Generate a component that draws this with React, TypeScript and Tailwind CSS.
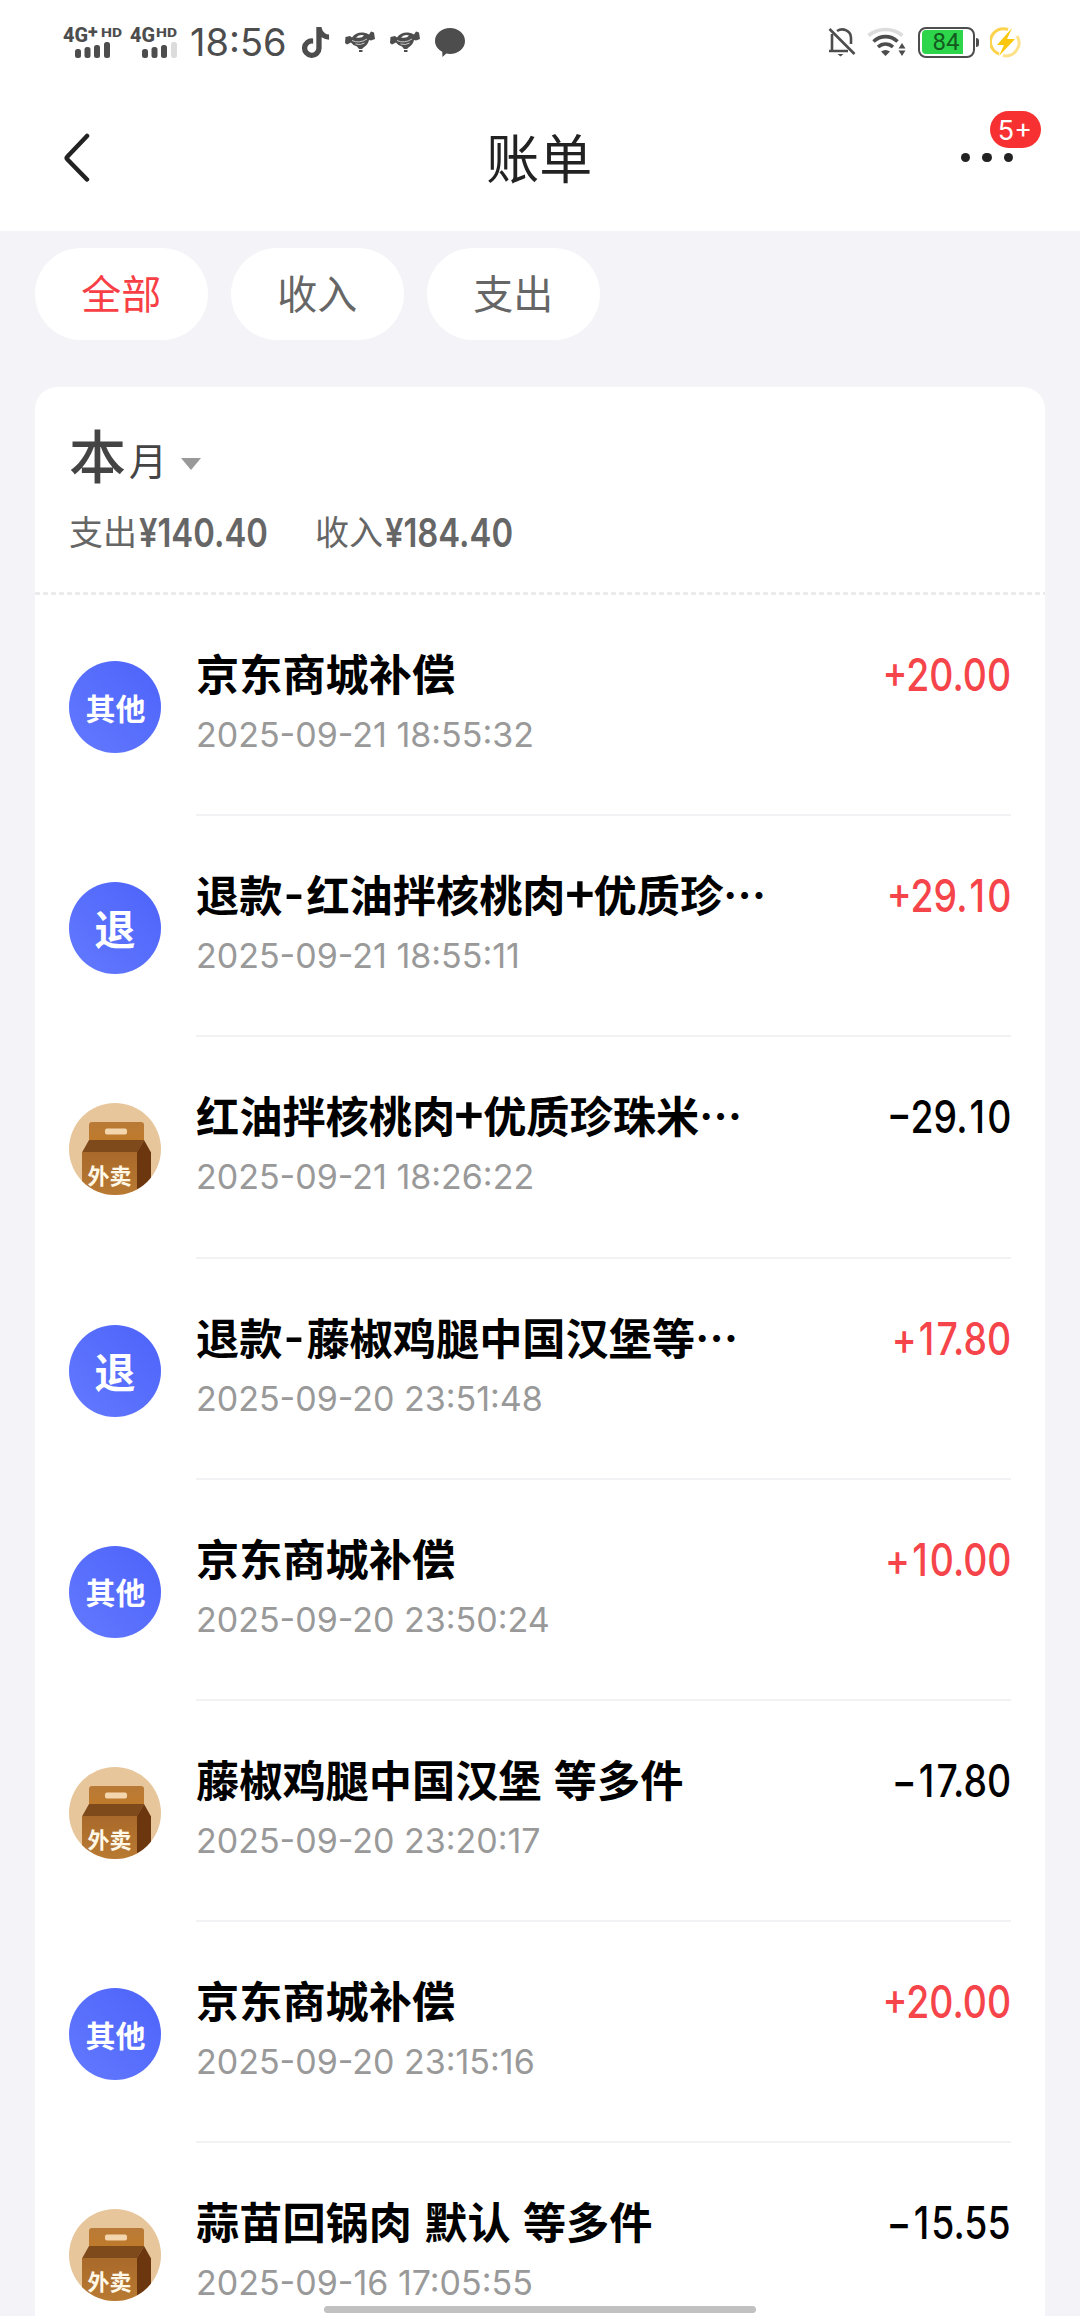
import { Fragment } from "react";
import { FaTiktok } from "react-icons/fa6";

type Kind = "other" | "refund" | "takeout";

interface Bill {
  id: number;
  kind: Kind;
  title: string;
  time: string;
  amount: string;
}

const filters = ["全部", "收入", "支出"];

const bills: Bill[] = [
  { id: 1, kind: "other", title: "京东商城补偿", time: "2025-09-21 18:55:32", amount: "+20.00" },
  { id: 2, kind: "refund", title: "退款-红油拌核桃肉+优质珍…", time: "2025-09-21 18:55:11", amount: "+29.10" },
  { id: 3, kind: "takeout", title: "红油拌核桃肉+优质珍珠米…", time: "2025-09-21 18:26:22", amount: "−29.10" },
  { id: 4, kind: "refund", title: "退款-藤椒鸡腿中国汉堡等…", time: "2025-09-20 23:51:48", amount: "+17.80" },
  { id: 5, kind: "other", title: "京东商城补偿", time: "2025-09-20 23:50:24", amount: "+10.00" },
  { id: 6, kind: "takeout", title: "藤椒鸡腿中国汉堡 等多件", time: "2025-09-20 23:20:17", amount: "−17.80" },
  { id: 7, kind: "other", title: "京东商城补偿", time: "2025-09-20 23:15:16", amount: "+20.00" },
  { id: 8, kind: "takeout", title: "蒜苗回锅肉 默认 等多件", time: "2025-09-16 17:05:55", amount: "−15.55" },
];

function Signal({ plus, weak }: { plus?: boolean; weak?: boolean }) {
  return (
    <svg width={plus ? 60 : 48} height="42" viewBox={plus ? "0 -4 60 42" : "0 -4 48 42"} fill="#4d4d4d">
      <g fontFamily="Roboto, sans-serif" fontWeight="800">
        <text x="0" y="17" fontSize="21" textLength="25" lengthAdjust="spacingAndGlyphs">4G</text>
        {plus && <text x="25" y="13" fontSize="18">+</text>}
        <text x={plus ? 38 : 26} y="12" fontSize="13.5" textLength="21" lengthAdjust="spacingAndGlyphs">HD</text>
      </g>
      <rect x="12" y="24" width="6" height="9" rx="2.5" />
      <rect x="21.5" y="22" width="6" height="11" rx="2.5" />
      <rect x="31" y="20" width="6" height="13" rx="2.5" />
      <rect x="41" y="17" width="6" height="16" rx="2.5" fill={weak ? "#dcdcdc" : "#4d4d4d"} />
    </svg>
  );
}

function Bird() {
  return (
    <svg width="30" height="22" viewBox="0 0 30 22" fill="#4d4d4d">
      <path d="M.5 6 5 5l2 1.500Q11 1 18 1.500q4 .3 6 2L26 .5l3 1L30 8l-4 1.500L24 9q-1 5-5.500 7.500L17 18h-3l-2-2.500Q7.500 14 6 11.500l-4 2L0 12z" />
      <path d="M11 6.500q4-3.500 8-2-2 3-8 2z" fill="#fff" />
      <path d="M7 9.500q7 3.500 15-1.500M10.500 13q5 1.500 9-1" fill="none" stroke="#fff" strokeWidth="0.7" />
      <path d="M14 20h3.500" stroke="#4d4d4d" strokeWidth="2" />
    </svg>
  );
}

function StatusBar() {
  return (
    <div className="flex h-[84px] items-center pl-[63px] pr-[59px]">
      <Signal plus />
      <div className="ml-[7px]">
        <Signal weak />
      </div>
      <span className="ml-[12px] w-[97px] whitespace-nowrap text-[38px] leading-none text-[#4d4d4d] font-['Inter',sans-serif]">
        18:56
      </span>
      <FaTiktok className="ml-[13px] size-[31px] text-[#4d4d4d]" />
      <div className="ml-[14px] flex gap-[15px]">
        <Bird />
        <Bird />
      </div>
      <svg className="ml-[15px]" width="30" height="29" viewBox="0 0 30 29" fill="#4d4d4d">
        <path d="M15 0c8.300 0 15 5.600 15 13S23.300 26 15 26c-1.400 0-2.500-.1-3.700-.4L7.500 29l-.3-5.200C2.800 21.500 0 17.500 0 13 0 5.600 6.700 0 15 0z" />
      </svg>

      <div className="ml-auto flex items-center">
        <svg width="28" height="30" viewBox="0 0 28 30" fill="none" stroke="#4d4d4d" strokeWidth="2.600">
          <path d="M4 7v17h16M1 24h4M9 4c6-4 14 0 14 7v6" />
          <path d="m1.500 2 25 25" />
          <path d="M9.500 27h6l-3 2.500z" fill="#4d4d4d" stroke="none" />
        </svg>
        <svg className="ml-[11px]" width="40" height="30" viewBox="0 0 40 30" fill="none" strokeWidth="3.600">
          <path d="M1.500 8.500c10-8 24-8 34 0" stroke="#dcdcdc" />
          <path d="M6.500 14.500c7-6.500 17-6.500 24 0M11 20c4.500-4 10.500-4 15 0" stroke="#4d4d4d" />
          <path d="M14 24.500q4.500-3 9 0L18.500 29zM31.500 21.500h7L35 16zM31.500 23.500h7L35 29z" fill="#4d4d4d" />
        </svg>
        <div className="ml-[11px] flex h-[31px] w-[57px] items-center rounded-[8px] border-[2.5px] border-[#4d4d4d] p-[1.5px]">
          <div className="flex h-full w-[41px] items-center justify-center rounded-l-[4px] bg-[#2dd54b] pl-[8px] text-[24px] leading-none text-[#14591f] font-['Roboto',sans-serif]">
            84
          </div>
        </div>
        <div className="ml-px h-[9px] w-[3px] rounded-r bg-[#4d4d4d]" />
        <svg className="ml-[11px]" width="31" height="31" viewBox="0 0 31 31" fill="none">
          <path d="M18 2.500A13 13 0 0 0 9 27" stroke="#fbd34d" strokeWidth="3" />
          <path d="M27 9a13 13 0 0 1-14 19.500" stroke="#fde28a" strokeWidth="3" />
          <path d="m22 1-15 17h7l-5 11 16-17h-8z" fill="#fbc70c" />
        </svg>
      </div>
    </div>
  );
}

function NavBar() {
  return (
    <div className="flex h-[147px] items-center justify-between pl-[62px] pr-[67px]">
      <svg width="30" height="50" viewBox="0 0 30 50" fill="none" stroke="#222" strokeWidth="4.500" strokeLinecap="round" strokeLinejoin="round">
        <path d="M25 3 5.500 23.500q-1.500 1.500 0 3L25 46.500" />
      </svg>
      <h1 className="ml-[26px] -mt-[2px] text-[53px] leading-none text-[#222]">账单</h1>
      <div className="relative flex gap-[12px]">
        <span className="size-[9.500px] rounded-full bg-[#222]" />
        <span className="size-[9.500px] rounded-full bg-[#222]" />
        <span className="size-[9.500px] rounded-full bg-[#222]" />
        <span className="absolute -top-[42px] left-[29px] flex h-[37px] w-[51px] items-center justify-center rounded-full bg-[#f73131] pt-[3px] text-[27px] text-white font-['Inter',sans-serif]">
          5+
        </span>
      </div>
    </div>
  );
}

function TakeoutIcon() {
  return (
    <svg className="size-[92px] rounded-full" viewBox="0 0 92 92">
      <defs>
        <linearGradient id="bag" x1="0" y1="0" x2="0" y2="1">
          <stop offset="0" stopColor="#a9692a" />
          <stop offset="1" stopColor="#b87a32" />
        </linearGradient>
        <linearGradient id="flap" x1="0" y1="0" x2="0" y2="1">
          <stop offset="0" stopColor="#b97a38" />
          <stop offset="1" stopColor="#bf7b2b" />
        </linearGradient>
      </defs>
      <rect width="92" height="92" fill="#e7c69c" />
      <path d="M20 38V22q0-3 3-3h49q3 0 3 3v16z" fill="url(#flap)" />
      <rect x="36" y="25.500" width="22" height="6" rx="2" fill="#f3d6ae" />
      <path d="M20 37h55l-7 12.500H13z" fill="#7f4a1b" />
      <path d="M13 49h55v43H13z" fill="url(#bag)" />
      <path d="m75 37 7 12.500V92H68V49z" fill="#6c360f" />
      <text x="18.500" y="80.500" fontSize="22" fontWeight="700" fill="#fff8e6" fontFamily="'Noto Sans CJK SC', sans-serif">
        外卖
      </text>
    </svg>
  );
}

function BillIcon({ kind }: { kind: Kind }) {
  if (kind === "takeout") return <TakeoutIcon />;
  return (
    <div
      className={`flex size-[92px] items-center justify-center rounded-full bg-linear-to-tr from-[#6379ff] to-[#4d63fa] font-bold text-white ${
        kind === "other" ? "pl-px text-[30px]" : "text-[41px]"
      }`}
    >
      {kind === "other" ? "其他" : "退"}
    </div>
  );
}

// "-", "+" and the space take a wider cell than the CJK font gives them
function BillTitle({ text }: { text: string }) {
  return (
    <p className="h-[60px] whitespace-pre text-[43.200px] font-bold leading-[60px] text-black [word-spacing:2.5px]">
      {text.split(/([-+])/).map((part, i) => {
        if (part === "-") return <span key={i} className="inline-block w-[24px] -translate-y-[3px] scale-x-125 text-center">-</span>;
        if (part === "+") return <span key={i} className="inline-block w-[28px] -translate-y-[2px] scale-115 text-center">+</span>;
        return <Fragment key={i}>{part}</Fragment>;
      })}
    </p>
  );
}

// The digit 1 sits in a slightly wider cell
function Amount({ value }: { value: string }) {
  return (
    <span
      className={`mt-[2px] origin-right scale-x-84 text-[44.500px] font-medium leading-[63px] font-['Inter',sans-serif] ${
        value.startsWith("+") ? "text-[#f5444a]" : "text-black"
      }`}
    >
      {value.split(/(1)/).map((part, i) => (part === "1" ? <span key={i} className="mx-[2.5px]">1</span> : part))}
    </span>
  );
}

function BillRow({ bill }: { bill: Bill }) {
  return (
    <div className="flex h-[221.200px] shrink-0 pl-[34px] pr-[34px]">
      <div className="mt-[66px] shrink-0">
        <BillIcon kind={bill.kind} />
      </div>
      <div className="ml-[35px] flex flex-1 justify-between border-b-2 border-[#f2f2f4] pt-[47px]">
        <div>
          <BillTitle text={bill.title} />
          <p className="mt-[13px] text-[34px] leading-[40px] text-[#999] font-['Inter',sans-serif]">{bill.time}</p>
        </div>
        <Amount value={bill.amount} />
      </div>
    </div>
  );
}

function Summary({ label, value }: { label: string; value: string }) {
  return (
    <p className="flex">
      {label}
      <b className="w-[132px] origin-left translate-x-[2px] translate-y-[2px] scale-x-82 whitespace-nowrap text-[40px] font-semibold font-['Inter',sans-serif]">
        {value}
      </b>
    </p>
  );
}

export default function App() {
  return (
    <div className="relative flex h-[2316px] w-[1080px] flex-col overflow-hidden bg-[#f3f3f8] font-['Noto_Sans_CJK_SC',sans-serif]">
      <header className="bg-white">
        <StatusBar />
        <NavBar />
      </header>

      <div className="mt-[17px] flex gap-[23.500px] px-[35px]">
        {filters.map((name, i) => (
          <button
            key={name}
            className={`h-[92px] w-[172.500px] rounded-full bg-white pb-[4px] text-[40px] ${i === 0 ? "text-[#f73f45]" : "text-[#666]"}`}
          >
            {name}
          </button>
        ))}
      </div>

      <main className="mx-[35px] mt-[47px] flex flex-1 flex-col rounded-t-[22px] bg-white">
        <section className="h-[205px] shrink-0 px-[34px] pt-[28px]">
          <div className="flex h-[76px] items-baseline text-[#444]">
            <span className="text-[57px] font-medium leading-[76px]">本</span>
            <span className="ml-[3px] -translate-y-[3px] text-[38px] leading-[76px]">月</span>
            <span className="ml-[14px] inline-block -translate-y-[8px] border-x-[10.500px] border-t-[12px] border-x-transparent border-t-[#999]" />
          </div>
          <div className="mt-[15px] flex gap-[46px] text-[34px] leading-[50px] text-[#666]">
            <Summary label="支出" value="¥140.40" />
            <Summary label="收入" value="¥184.40" />
          </div>
        </section>
        <div className="h-[3px] shrink-0 bg-[repeating-linear-gradient(90deg,#ebebee_0_5px,transparent_5px_8px)]" />
        <div className="flex h-0 flex-1 flex-col">
          {bills.map((bill) => (
            <BillRow key={bill.id} bill={bill} />
          ))}
        </div>
      </main>

      {/* Gesture bar */}
      <div className="absolute bottom-[3px] left-[324px] h-[7px] w-[432px] rounded-full bg-[#c1c1c1]" />
    </div>
  );
}
